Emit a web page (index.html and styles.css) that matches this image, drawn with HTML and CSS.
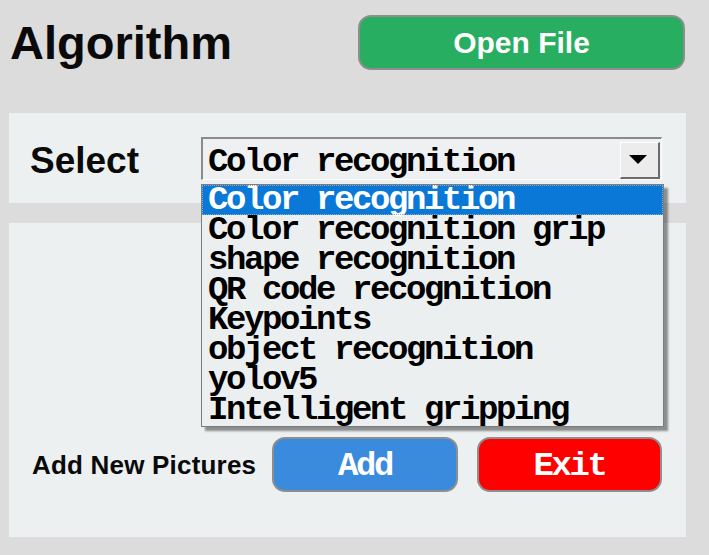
FILE: index.html
```html
<!DOCTYPE html>
<html>
<head>
<meta charset="utf-8">
<title>Algorithm</title>
<link rel="stylesheet" href="styles.css">
</head>
<body>
<div class="app">
  <header class="header">
    <h1 class="title">Algorithm</h1>
    <button class="btn btn-open">Open File</button>
  </header>

  <section class="panel panel-select">
    <span class="label label-select">Select</span>
    <div class="combo">
      <div class="combo-box">
        <span class="combo-text">Color recognition</span>
        <span class="combo-arrow"><span class="tri"></span></span>
      </div>
      <ul class="combo-list">
        <li class="item item-active">Color recognition</li>
        <li class="item">Color recognition grip</li>
        <li class="item">shape recognition</li>
        <li class="item">QR code recognition</li>
        <li class="item">Keypoints</li>
        <li class="item">object recognition</li>
        <li class="item">yolov5</li>
        <li class="item">Intelligent gripping</li>
      </ul>
    </div>
  </section>

  <section class="panel panel-main">
    <div class="actions">
      <span class="label label-add">Add New Pictures</span>
      <button class="btn btn-add">Add</button>
      <button class="btn btn-exit">Exit</button>
    </div>
  </section>
</div>
</body>
</html>
```

FILE: styles.css
```css
html, body {
  margin: 0;
  padding: 0;
}
body {
  background: #dcdcdc;
  width: 709px;
  height: 555px;
  overflow: hidden;
  font-family: "Liberation Sans", Arial, sans-serif;
}
.app {
  display: flex;
  flex-direction: column;
}
.header {
  display: flex;
  align-items: center;
  justify-content: space-between;
  padding: 15px 24px 0 10px;
  height: 55px;
}
.title {
  margin: 0;
  font-size: 47px;
  line-height: 47px;
  font-weight: bold;
  color: #0a0a0a;
}
.btn {
  box-sizing: border-box;
  border: 2px solid #8e8e8e;
  border-radius: 13px;
  color: #fff;
  padding: 0;
  cursor: pointer;
}
.btn-open {
  width: 327px;
  height: 55px;
  background: #27ae60;
  font-family: "Liberation Sans", Arial, sans-serif;
  font-weight: bold;
  font-size: 30px;
}
.panel {
  background: #ecf0f1;
  margin-left: 9px;
  width: 677px;
}
.panel-select {
  margin-top: 43px;
  height: 90px;
  display: grid;
  grid-template-columns: 171px 461px;
  align-items: center;
  padding-left: 21px;
  box-sizing: border-box;
  position: relative;
  z-index: 2;
}
.label {
  font-weight: bold;
  color: #0a0a0a;
}
.label-select {
  font-size: 37px;
  line-height: 37px;
  padding-top: 4px;
}
.combo {
  position: relative;
  height: 43px;
}
.combo-box {
  box-sizing: border-box;
  height: 43px;
  display: flex;
  align-items: flex-end;
  justify-content: space-between;
  border-top: 2px solid #8a8a8a;
  border-left: 2px solid #8a8a8a;
  border-right: 1px solid #fdfdfd;
  border-bottom: 1px solid #fdfdfd;
  background: #eef0f1;
}
.combo-text,
.item,
.btn-add,
.btn-exit {
  font-family: "Liberation Mono", "Courier New", monospace;
  font-weight: bold;
  font-size: 34px;
  letter-spacing: -2.4px;
}
.combo-text {
  align-self: flex-start;
  line-height: 30px;
  padding: 8px 0 0 5px;
  color: #000;
  white-space: nowrap;
}
.combo-arrow {
  box-sizing: border-box;
  width: 40px;
  height: 37px;
  margin-right: 1px;
  background: #ececec;
  border-top: 1px solid #fff;
  border-left: 1px solid #fff;
  border-right: 2px solid #6c6c6c;
  border-bottom: 2px solid #6c6c6c;
  display: flex;
  align-items: center;
  justify-content: center;
}
.tri {
  width: 0;
  height: 0;
  border-left: 9px solid transparent;
  border-right: 9px solid transparent;
  border-top: 9px solid #000;
  margin-right: 4px;
}
.combo-list {
  position: absolute;
  left: 0;
  top: 47px;
  width: 463px;
  height: 243px;
  box-sizing: border-box;
  margin: 0;
  padding: 0;
  list-style: none;
  background: #eceff0;
  border: 1px solid #7c7c7c;
  box-shadow: 4px 4px 2px rgba(60, 60, 60, 0.55);
}
.item {
  height: 30px;
  line-height: 30px;
  padding-left: 6px;
  color: #000;
  white-space: nowrap;
  box-sizing: border-box;
}
.item-active {
  background: #0a78d7;
  color: #fff;
  outline: 1px dotted #9aa7b4;
  outline-offset: -1px;
}
.panel-main {
  margin-top: 20px;
  height: 314px;
  display: flex;
  flex-direction: column;
  justify-content: flex-end;
  padding: 0 0 45px 23px;
  box-sizing: border-box;
}
.actions {
  display: grid;
  grid-template-columns: 221px 186px 185px;
  column-gap: 19px;
  align-items: center;
}
.label-add {
  font-size: 26px;
  line-height: 26px;
  letter-spacing: 0.2px;
  white-space: nowrap;
}
.btn-add,
.btn-exit {
  height: 55px;
  line-height: 30px;
  padding-top: 2px;
}
.btn-add {
  background: #3a8ade;
}
.btn-exit {
  background: #ff0000;
}
```
